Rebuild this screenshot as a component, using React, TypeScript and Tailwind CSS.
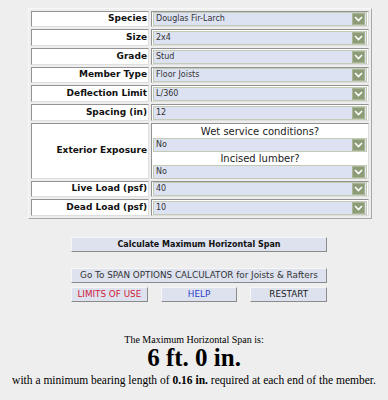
import React from "react";

const Chevron = () => (
  <div className="w-[13px] h-[12px] bg-[#8c9c76] border border-[#a9b596] flex items-center justify-center shrink-0">
    <svg width="9" height="6" viewBox="0 0 9 6">
      <polyline points="1,1 4.5,4.5 8,1" fill="none" stroke="#ffffff" strokeWidth="1.6" />
    </svg>
  </div>
);

const Select = ({ value }: { value: string }) => (
  <div className="h-[14px] w-full border border-[#c3cab5] bg-[#dde2f2] flex items-center justify-between pl-[2px] pr-[1px]">
    <span className="text-[8px] leading-none text-[#333] font-['DejaVu_Sans',sans-serif]">{value}</span>
    <Chevron />
  </div>
);

const Label = ({ children }: { children: React.ReactNode }) => (
  <div className="bg-white border border-t-[#939393] border-l-[#939393] border-r-[#dedede] border-b-[#dedede] flex items-center justify-end pr-[1px] text-[9px] font-bold text-[#111] font-['DejaVu_Sans',sans-serif]">
    {children}
  </div>
);

const Value = ({ children, extra = "" }: { children: React.ReactNode; extra?: string }) => (
  <div className={"bg-white border border-t-[#939393] border-l-[#939393] border-r-[#dedede] border-b-[#dedede] flex flex-col justify-center px-[1px] " + extra}>
    {children}
  </div>
);

const Btn = ({ children, cls }: { children: React.ReactNode; cls: string }) => (
  <div className={"h-[15px] bg-[#dde2ee] border border-t-[#f6f6f6] border-l-[#f6f6f6] border-r-[#8a8a8a] border-b-[#8a8a8a] flex items-center justify-center leading-none font-['DejaVu_Sans',sans-serif] " + cls}>
    {children}
  </div>
);

export default function App() {
  return (
    <div className="w-[388px] h-[400px] bg-[#eeeeee] pt-[8px] overflow-hidden">
      <div className="ml-[28px] w-[344px] border border-t-[#f8f8f8] border-l-[#f8f8f8] border-r-[#a8a8a8] border-b-[#a8a8a8] p-[2px] grid grid-cols-[118px_218px] grid-rows-[16px_17px_17px_16px_17px_17px_56px_16px_17px] gap-[2px]">
        <Label>Species</Label>
        <Value><Select value="Douglas Fir-Larch" /></Value>
        <Label>Size</Label>
        <Value><Select value="2x4" /></Value>
        <Label>Grade</Label>
        <Value><Select value="Stud" /></Value>
        <Label>Member Type</Label>
        <Value><Select value="Floor Joists" /></Value>
        <Label>Deflection Limit</Label>
        <Value><Select value="L/360" /></Value>
        <Label>Spacing (in)</Label>
        <Value><Select value="12" /></Value>
        <Label>Exterior Exposure</Label>
        <Value extra="justify-start">
          <div className="text-center text-[10px] leading-[12px] mt-[2px] text-[#222] font-['DejaVu_Sans',sans-serif]">Wet service conditions?</div>
          <Select value="No" />
          <div className="text-center text-[10px] leading-[12px] mt-[1px] text-[#222] font-['DejaVu_Sans',sans-serif]">Incised lumber?</div>
          <Select value="No" />
        </Value>
        <Label>Live Load (psf)</Label>
        <Value><Select value="40" /></Value>
        <Label>Dead Load (psf)</Label>
        <Value><Select value="10" /></Value>
      </div>

      <div className="ml-[71px] w-[256px] mt-[18px] flex flex-col">
        <Btn cls="font-bold text-[8px] text-[#111]">Calculate Maximum Horizontal Span</Btn>
        <Btn cls="mt-[16px] text-[8.8px] text-[#333]">Go To SPAN OPTIONS CALCULATOR for Joists &amp; Rafters</Btn>
        <div className="mt-[4px] flex gap-[13px]">
          <Btn cls="w-[77px] text-[8.8px] text-[#d0203a]">LIMITS OF USE</Btn>
          <Btn cls="w-[77px] text-[8.8px] text-[#2a3fcf]">HELP</Btn>
          <Btn cls="w-[77px] text-[8.8px] text-[#222]">RESTART</Btn>
        </div>
      </div>

      <div className="mt-[31px] flex flex-col items-center text-black font-['Liberation_Serif',serif]">
        <div className="text-[10px] leading-[13px]">The Maximum Horizontal Span is:</div>
        <div className="text-[25px] leading-[24px] font-bold">6 ft. 0 in.</div>
        <div className="text-[11.5px] leading-[13px] mt-[4px] whitespace-nowrap">
          with a minimum bearing length of <b>0.16 in.</b> required at each end of the member.
        </div>
      </div>
    </div>
  );
}
